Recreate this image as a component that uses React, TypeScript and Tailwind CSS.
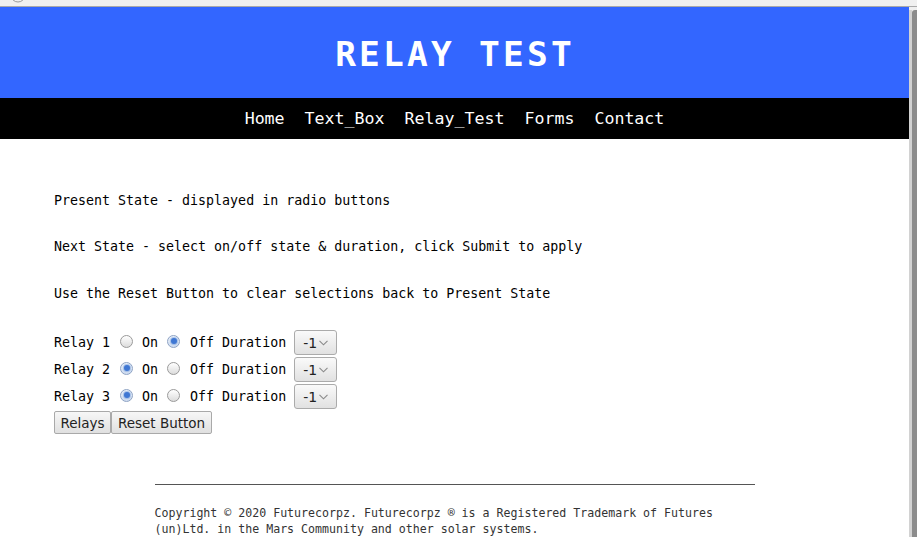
import React, { useState } from 'react';

const mono = { fontFamily: '"DejaVu Sans Mono", "Liberation Mono", monospace' };
const sans = { fontFamily: '"DejaVu Sans", "Liberation Sans", sans-serif' };

const NAV = ['Home', 'Text_Box', 'Relay_Test', 'Forms', 'Contact'];

const Radio: React.FC<{ checked: boolean; onClick: () => void; className?: string }> = ({ checked, onClick, className }) => (
  <span
    onClick={onClick}
    className={`inline-flex w-[13px] h-[13px] mb-[3px] rounded-full border items-center justify-center cursor-pointer ${
      checked
        ? 'border-[#8ea3c4] bg-gradient-to-b from-[#eef3fb] to-[#cfdcf0]'
        : 'border-[#9a9a9a] bg-gradient-to-b from-[#ffffff] to-[#dcdcdc]'
    } ${className ?? ''}`}
  >
    {checked && <span className="w-[6px] h-[6px] rounded-full bg-[#3f77d3] shadow-[0_0_1px_1px_rgba(120,160,220,0.6)]" />}
  </span>
);

const DurationSelect: React.FC = () => (
  <div
    className="ml-[8px] w-[43px] h-[25px] flex items-center rounded-[3px] border border-[#ababab] bg-gradient-to-b from-[#fafafa] to-[#e1e1e1] text-[14px] text-[#222]"
    style={sans}
  >
    <span className="pl-[8px]">-1</span>
    <svg width="9" height="6" viewBox="0 0 9 6" className="ml-[2px] mt-[1px]">
      <path d="M0.5 0.8 L4.5 4.8 L8.5 0.8" fill="none" stroke="#8a8a8a" strokeWidth="1.1" />
    </svg>
  </div>
);

const App: React.FC = () => {
  const [relays, setRelays] = useState<boolean[]>([false, true, true]);

  const setRelay = (i: number, on: boolean) => {
    setRelays((prev) => prev.map((v, j) => (j === i ? on : v)));
  };

  return (
    <div className="w-[917px] h-[537px] overflow-hidden flex flex-col bg-white">
      {/* browser chrome edge */}
      <div className="h-[7px] shrink-0 bg-[#f0f0f0] border-b border-[#a9a9a9] relative overflow-hidden">
        <svg width="30" height="7" className="absolute left-0 top-0">
          <circle cx="18" cy="-5" r="7" fill="none" stroke="#9a9a9a" strokeWidth="1" />
        </svg>
      </div>

      <div className="flex flex-1 min-h-0">
        <div className="w-[909px] flex flex-col" style={mono}>
          <header className="h-[91px] shrink-0 bg-[#3366ff] flex items-center justify-center pt-[4px]">
            <h1 className="text-white font-bold text-[34.5px] tracking-[3.2px] pl-[1px]">RELAY TEST</h1>
          </header>

          <nav className="h-[41px] shrink-0 bg-black flex items-center justify-center gap-[20px] pt-[2px] text-white text-[16.6px]">
            {NAV.map((n) => (
              <a key={n} href="#" className="leading-none">
                {n}
              </a>
            ))}
          </nav>

          <main className="px-[54px] text-[13.3px] leading-[16px] text-black">
            <p className="mt-[54px]">Present State - displayed in radio buttons</p>
            <p className="mt-[30px]">Next State - select on/off state &amp; duration, click Submit to apply</p>
            <p className="mt-[31px]">Use the Reset Button to clear selections back to Present State</p>

            <form className="mt-[27px]" onSubmit={(e) => e.preventDefault()}>
              {relays.map((on, i) => (
                <div key={i} className="h-[27px] flex items-center">
                  <span>Relay {i + 1}</span>
                  <Radio checked={on} onClick={() => setRelay(i, true)} className="ml-[10px]" />
                  <span className="ml-[9px]">On</span>
                  <Radio checked={!on} onClick={() => setRelay(i, false)} className="ml-[9px]" />
                  <span className="ml-[10px]">Off Duration</span>
                  <DurationSelect />
                </div>
              ))}
              <div className="flex pt-[1px]" style={sans}>
                <button
                  type="submit"
                  className="w-[57px] h-[23px] border border-[#a9a9a9] rounded-[2px] bg-gradient-to-b from-[#f7f7f7] to-[#e0e0e0] text-[13.5px] text-[#222]"
                >
                  Relays
                </button>
                <button
                  type="button"
                  onClick={() => setRelays([false, true, true])}
                  className="w-[101px] h-[23px] border border-[#a9a9a9] rounded-[2px] bg-gradient-to-b from-[#f7f7f7] to-[#e0e0e0] text-[13.5px] text-[#222]"
                >
                  Reset Button
                </button>
              </div>
            </form>
          </main>

          <footer className="w-[600px] mx-auto mt-[50px]">
            <hr className="border-0 border-t border-[#555]" />
            <p className="mt-[20px] text-[11.6px] leading-[16px] text-[#333]">
              Copyright © 2020 Futurecorpz. Futurecorpz ® is a Registered Trademark of Futures (un)Ltd. in the Mars
              Community and other solar systems.
            </p>
          </footer>
        </div>

        {/* scrollbar */}
        <div className="w-[8px] flex flex-col bg-[#efefef]">
          <div className="h-[3px] shrink-0" />
          <div className="flex flex-1">
            <div className="w-[3px] bg-[#d2d2d2]" />
            <div className="w-[5px] bg-[#8c8c8c] rounded-tl-[3px]" />
          </div>
        </div>
      </div>
    </div>
  );
};

export default App;
